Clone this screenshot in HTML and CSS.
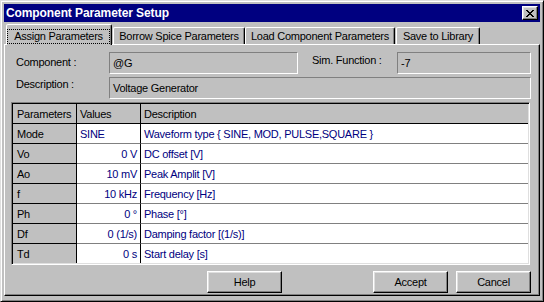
FILE: index.html
```html
<!DOCTYPE html>
<html lang="en">
<head>
    <meta charset="UTF-8">
    <title>Component Parameter Setup</title>
    <link rel="stylesheet" href="styles.css">
</head>
<body>
    <div class="window">
        <div class="titlebar">
            <span class="title">Component Parameter Setup</span>
            <button class="close-btn">
                <svg width="8" height="7" viewBox="0 0 8 7" shape-rendering="crispEdges">
                    <path d="M0 0h2v1h-2z M6 0h2v1h-2z M1 1h2v1h-2z M5 1h2v1h-2z M2 2h4v1h-4z M3 3h2v1h-2z M2 4h4v1h-4z M1 5h2v1h-2z M5 5h2v1h-2z M0 6h2v1h-2z M6 6h2v1h-2z" fill="#000"/>
                </svg>
            </button>
        </div>

        <div class="tabs">
            <div class="tab active"><span class="focus">Assign Parameters</span></div>
            <div class="tab tab-borrow">Borrow Spice Parameters</div>
            <div class="tab tab-load">Load Component Parameters</div>
            <div class="tab tab-save">Save to Library</div>
        </div>

        <div class="panel">
            <div class="field-row">
                <span class="label">Component :</span>
                <div class="field field-comp">@G</div>
                <span class="label label-sim">Sim. Function :</span>
                <div class="field field-sim">-7</div>
            </div>
            <div class="field-row">
                <span class="label label-desc">Description :</span>
                <div class="field field-desc">Voltage Generator</div>
            </div>

            <div class="grid-wrap">
                <table class="params">
                    <colgroup>
                        <col class="col-name">
                        <col class="col-value">
                        <col>
                    </colgroup>
                    <tr class="head">
                        <td class="name">Parameters</td>
                        <td class="value-h">Values</td>
                        <td class="desc">Description</td>
                    </tr>
                    <tr>
                        <td class="name">Mode</td>
                        <td class="value left">SINE</td>
                        <td class="desc">Waveform type { SINE, MOD, PULSE,SQUARE }</td>
                    </tr>
                    <tr>
                        <td class="name">Vo</td>
                        <td class="value">0 V</td>
                        <td class="desc">DC offset [V]</td>
                    </tr>
                    <tr>
                        <td class="name">Ao</td>
                        <td class="value">10 mV</td>
                        <td class="desc">Peak Amplit [V]</td>
                    </tr>
                    <tr>
                        <td class="name">f</td>
                        <td class="value">10 kHz</td>
                        <td class="desc">Frequency [Hz]</td>
                    </tr>
                    <tr>
                        <td class="name">Ph</td>
                        <td class="value">0 °</td>
                        <td class="desc">Phase [°]</td>
                    </tr>
                    <tr>
                        <td class="name">Df</td>
                        <td class="value">0 (1/s)</td>
                        <td class="desc">Damping factor [(1/s)]</td>
                    </tr>
                    <tr class="last">
                        <td class="name">Td</td>
                        <td class="value">0 s</td>
                        <td class="desc">Start delay [s]</td>
                    </tr>
                </table>
            </div>

            <div class="buttons">
                <button class="btn btn-help">Help</button>
                <button class="btn btn-accept">Accept</button>
                <button class="btn btn-cancel">Cancel</button>
            </div>
        </div>
    </div>
</body>
</html>
```

FILE: styles.css
```css
body {
    margin: 0;
    font-family: "Liberation Sans", Arial, sans-serif;
    font-size: 11px;
    letter-spacing: -0.25px;
    color: #000;
}

.window {
    width: 544px;
    height: 302px;
    box-sizing: border-box;
    background: #c0c0c0;
    border: 1px solid;
    border-color: #dfdfdf #000 #000 #dfdfdf;
    box-shadow: inset 1px 1px #fff, inset -1px -1px #808080;
    padding: 3px;
    display: flex;
    flex-direction: column;
}

/* title bar */
.titlebar {
    height: 18px;
    background: #000080;
    color: #fff;
    display: flex;
    align-items: center;
    padding: 0 2px;
}
.title {
    flex: 1;
    font-weight: bold;
    font-size: 12px;
    letter-spacing: -0.1px;
}
.close-btn {
    width: 16px;
    height: 14px;
    box-sizing: border-box;
    padding: 0;
    background: #c0c0c0;
    border: 1px solid;
    border-color: #fff #000 #000 #fff;
    box-shadow: inset -1px -1px #808080, inset 1px 1px #dfdfdf;
    display: flex;
    align-items: center;
    justify-content: center;
}

/* tabs */
.tabs {
    display: flex;
    align-items: flex-start;
    height: 21px;
    margin-top: 1px;
    padding-left: 2px;
}
.tab {
    box-sizing: border-box;
    height: 17px;
    margin-top: 4px;
    padding-top: 2px;
    line-height: 13px;
    text-align: center;
    white-space: nowrap;
    border: 1px solid;
    border-bottom: none;
    border-color: #fff #000 transparent #fff;
    border-radius: 2px 2px 0 0;
    box-shadow: inset -1px 0 #808080;
}
.tab.active {
    width: 106px;
    height: 21px;
    margin-top: 1px;
    padding-top: 4px;
    position: relative;
    z-index: 1;
    background: #c0c0c0;
}
.focus {
    display: block;
    box-sizing: border-box;
    height: 15px;
    margin-right: 1px;
    line-height: 13px;
    border: 1px dotted #000;
}
.tab-borrow {
    width: 132px;
    margin-left: 1px;
}
.tab-load {
    width: 150px;
}
.tab-save {
    width: 84px;
    margin-left: 1px;
}

/* panel */
.panel {
    box-sizing: border-box;
    height: 252px;
    border: 1px solid;
    border-color: #fff #000 #000 #fff;
    box-shadow: inset -1px -1px #808080;
    padding: 7px 8px 0 6px;
}
.field-row {
    display: flex;
    height: 22px;
    margin-bottom: 3px;
}
.label {
    width: 98px;
    box-sizing: border-box;
    padding-left: 5px;
    line-height: 20px;
}
.label-desc {
    margin-top: -3px;
}
.label-sim {
    width: 85px;
    margin-left: 14px;
    margin-top: -2px;
    padding-left: 0;
}
.field {
    box-sizing: border-box;
    height: 22px;
    padding-left: 3px;
    line-height: 21px;
    border: 1px solid;
    border-color: #808080 #fff #fff #808080;
}
.field-comp {
    width: 189px;
}
.field-sim {
    width: 134px;
}
.field-desc {
    width: 422px;
}

/* parameter grid */
.grid-wrap {
    width: 519px;
    height: 163px;
    box-sizing: border-box;
    background: #fff;
    border: 1px solid;
    border-color: #808080 #fff #fff #808080;
    box-shadow: inset 1px 1px #000, inset -1px -1px #dfdfdf;
    padding: 1px;
}
.params {
    width: 100%;
    table-layout: fixed;
    border-spacing: 0;
}
.col-name,
.col-value {
    width: 64px;
}
.params td {
    box-sizing: border-box;
    height: 20px;
    padding: 0 3px;
    white-space: nowrap;
    overflow: hidden;
    border-bottom: 1px solid #808080;
}
.params td.name {
    background: #c0c0c0;
    padding-left: 4px;
    border-right: 1px solid #000;
    border-bottom-color: #000;
}
.params td.value,
.params td.value-h {
    border-right: 1px solid #000;
    text-align: right;
    color: #000080;
}
.params td.value.left,
.params td.value-h {
    text-align: left;
}
.params td.desc {
    color: #000080;
}
.params tr.head td {
    background: #c0c0c0;
    color: #000;
    border-bottom-color: #000;
}
.params tr.last td {
    height: 19px;
    border-bottom: none;
}

/* buttons */
.buttons {
    display: flex;
    margin-top: 6px;
}
.btn {
    width: 75px;
    height: 22px;
    box-sizing: border-box;
    padding: 0;
    background: #c0c0c0;
    font-family: inherit;
    font-size: 11px;
    letter-spacing: inherit;
    color: #000;
    border: 1px solid;
    border-color: #fff #000 #000 #fff;
    box-shadow: inset -1px -1px #808080, inset 1px 1px #dfdfdf;
}
.btn-help {
    margin-left: 196px;
}
.btn-accept {
    margin-left: auto;
}
.btn-cancel {
    margin-left: 8px;
}
```
